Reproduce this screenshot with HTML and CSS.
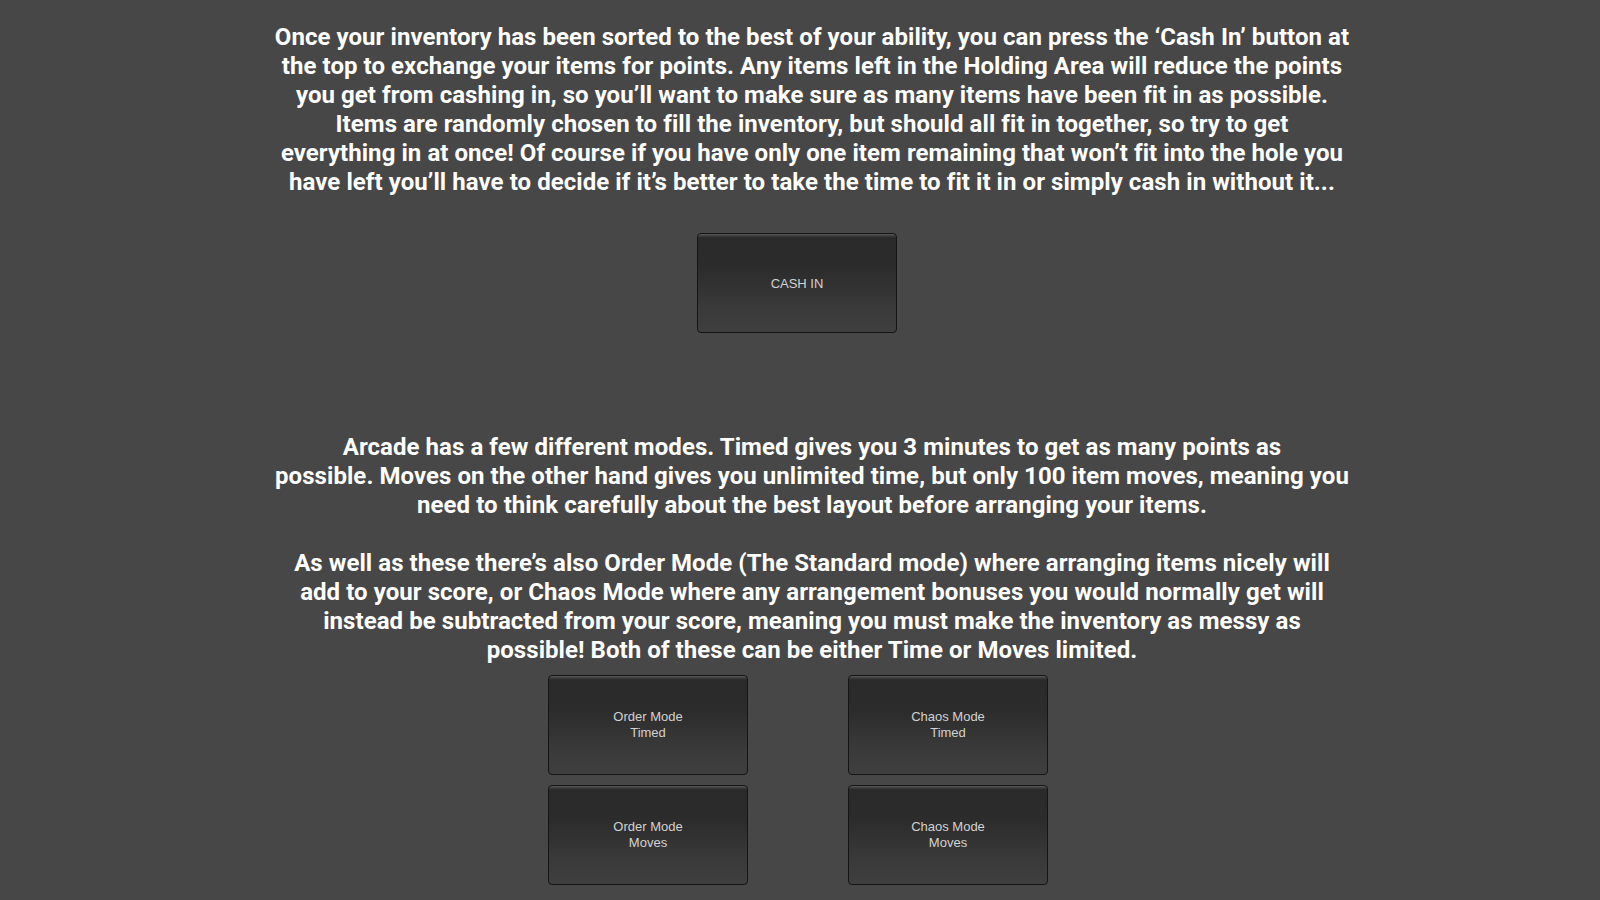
FILE: index.html
```html
<!DOCTYPE html>
<html>
<head>
<meta charset="utf-8">
<link rel="stylesheet" href="styles.css">
</head>
<body>
<div class="page">
  <p class="info info-top">Once your inventory has been sorted to the best of your ability, you can press the ‘Cash In’ button at<br>the top to exchange your items for points. Any items left in the Holding Area will reduce the points<br>you get from cashing in, so you’ll want to make sure as many items have been fit in as possible.<br>Items are randomly chosen to fill the inventory, but should all fit in together, so try to get<br>everything in at once! Of course if you have only one item remaining that won’t fit into the hole you<br>have left you’ll have to decide if it’s better to take the time to fit it in or simply cash in without it...</p>
  <div class="cash-row">
    <div class="btn">CASH IN</div>
  </div>
  <div class="info info-modes">
    <p>Arcade has a few different modes. Timed gives you 3 minutes to get as many points as<br>possible. Moves on the other hand gives you unlimited time, but only 100 item moves, meaning you<br>need to think carefully about the best layout before arranging your items.</p>
    <p>As well as these there’s also Order Mode (The Standard mode) where arranging items nicely will<br>add to your score, or Chaos Mode where any arrangement bonuses you would normally get will<br>instead be subtracted from your score, meaning you must make the inventory as messy as<br>possible! Both of these can be either Time or Moves limited.</p>
  </div>
  <div class="mode-grid">
    <div class="btn">Order Mode<br>Timed</div>
    <div class="btn">Chaos Mode<br>Timed</div>
    <div class="btn">Order Mode<br>Moves</div>
    <div class="btn">Chaos Mode<br>Moves</div>
  </div>
</div>
</body>
</html>
```

FILE: styles.css
```css
html, body {
  margin: 0;
  padding: 0;
  background: #474747;
  width: 1600px;
  height: 900px;
  overflow: hidden;
}

.page {
  display: flex;
  flex-direction: column;
  padding-top: 23px;
}

.info {
  width: 1130px;
  margin: 0 0 0 247px;
  color: #ffffff;
  font-family: Roboto, "Liberation Sans", sans-serif;
  font-weight: 700;
  font-size: 24px;
  letter-spacing: 0.06px;
  line-height: 28.9px;
  text-align: center;
  white-space: nowrap;
}

.info p {
  margin: 0;
}

.info-modes {
  display: flex;
  flex-direction: column;
  gap: 28.9px;
  margin-top: 100px;
}

.cash-row {
  display: flex;
  padding-left: 697px;
  margin-top: 37px;
}

.btn {
  box-sizing: border-box;
  width: 200px;
  height: 100px;
  border: 1px solid #151515;
  border-radius: 4px;
  background: linear-gradient(#5c5c5c 0px, #3a3a3a 2px, #2a2a2a 4px, #2c2c2c 35%, #3a3a3a 75%, #3f3f3f 100%);
  display: flex;
  align-items: center;
  justify-content: center;
  text-align: center;
  color: #d2d2d2;
  font-family: "Liberation Sans", Arial, sans-serif;
  font-size: 13px;
  line-height: 15.3px;
}

.mode-grid {
  display: grid;
  grid-template-columns: 200px 200px;
  column-gap: 100px;
  row-gap: 10px;
  padding-left: 548px;
  margin-top: 10px;
}
```
